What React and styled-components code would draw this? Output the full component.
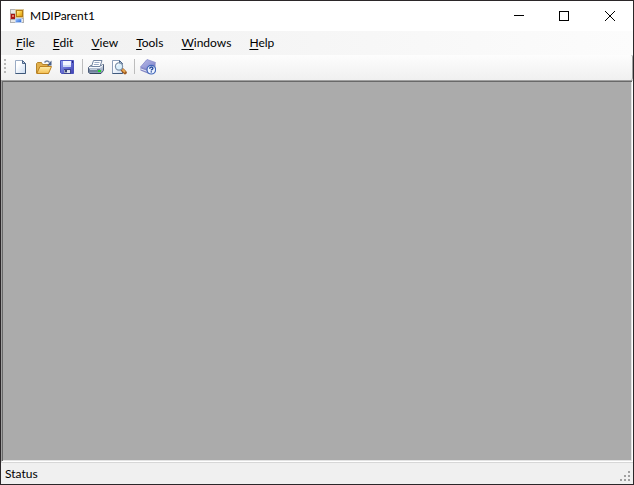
import styled, { createGlobalStyle } from "styled-components";

const MENUS = ["File", "Edit", "View", "Tools", "Windows", "Help"];

const App = () => {
  return (
    <>
      <GlobalStyle />
      <Window>
        <TitleBar>
          <AppIcon />
          <Title>MDIParent1</Title>
          <CaptionButton aria-label="Minimize">
            <CaptionSvg viewBox="0 0 11 11">
              <path d="M1 4.5H11" />
            </CaptionSvg>
          </CaptionButton>
          <CaptionButton aria-label="Maximize">
            <CaptionSvg viewBox="0 0 11 11">
              <path d="M.5 .5h9v9h-9z" />
            </CaptionSvg>
          </CaptionButton>
          <CaptionButton aria-label="Close">
            <CaptionSvg viewBox="0 0 11 11" $smooth>
              <path d="M0 0l10 10M10 0l-10 10" />
            </CaptionSvg>
          </CaptionButton>
        </TitleBar>
        <MenuBar>
          {MENUS.map((menu) => (
            <MenuItem key={menu}>
              <Mnemonic>{menu[0]}</Mnemonic>
              {menu.slice(1)}
            </MenuItem>
          ))}
        </MenuBar>
        <ToolBar role="toolbar">
          <Grip />
          <ToolButton aria-label="New">
            <NewIcon />
          </ToolButton>
          <ToolButton aria-label="Open">
            <OpenIcon />
          </ToolButton>
          <ToolButton aria-label="Save">
            <SaveIcon />
          </ToolButton>
          <Separator />
          <ToolButton aria-label="Print">
            <PrintIcon />
          </ToolButton>
          <ToolButton aria-label="Print Preview">
            <PreviewIcon />
          </ToolButton>
          <Separator />
          <ToolButton aria-label="Help">
            <HelpIcon />
          </ToolButton>
        </ToolBar>
        <MdiClient />
        <StatusBar>
          <span>Status</span>
          <SizeGrip viewBox="0 0 11 11">
            <path d="M8 0h2v2h-2zM4 4h2v2h-2zM8 4h2v2h-2zM0 8h2v2h-2zM4 8h2v2h-2zM8 8h2v2h-2z" />
          </SizeGrip>
        </StatusBar>
      </Window>
    </>
  );
};

const AppIcon = () => (
  <AppSvg viewBox="0 0 14 14">
    <defs>
      <linearGradient id="appGold" x2="1" y2="1">
        <stop stopColor="#fff0a0" />
        <stop offset=".5" stopColor="#f7c83c" />
        <stop offset="1" stopColor="#d99a10" />
      </linearGradient>
      <linearGradient id="appBlue" x2="1" y2="1">
        <stop stopColor="#9cc4ff" />
        <stop offset="1" stopColor="#2f6cd8" />
      </linearGradient>
    </defs>
    <path d="M0 0h14v14h-14z" fill="#b0b0b0" />
    <path d="M1 1h4v3h-4zM1 11h4v2h-4zM12 10h1v3h-1z" fill="#e8e8e8" />
    <path d="M0 4h1v7h-1z" fill="#c98a8a" />
    <path d="M1 5h4v5h-4z" fill="#a51414" />
    <path d="M2 6h2v2h-2z" fill="#e77a6a" />
    <path d="M5 0h9v9h-9z" fill="#d9c596" />
    <path d="M6 1h7v7h-7z" fill="#b57a14" />
    <path d="M7 2h5v5h-5z" fill="url(#appGold)" />
    <path d="M5 9h7v5h-7z" fill="#b8cdf0" />
    <path d="M6 10h5v3h-5z" fill="url(#appBlue)" />
  </AppSvg>
);

const NewIcon = () => (
  <ToolSvg viewBox="0 0 16 16">
    <defs>
      <linearGradient id="paper" x2="1" y2="1">
        <stop offset=".3" stopColor="#fff" />
        <stop offset="1" stopColor="#c9daf0" />
      </linearGradient>
    </defs>
    <path d="M2.500 1.500h7l3 3v10h-10z" fill="url(#paper)" stroke="#9aabc4" />
    <path d="M12.500 4.500v10h-10" fill="none" stroke="#3e5879" />
    <path d="M9.500 1.500v3h3z" fill="#c1d0e4" stroke="#4a6489" />
  </ToolSvg>
);

const OpenIcon = () => (
  <ToolSvg viewBox="0 0 16 16">
    <defs>
      <linearGradient id="folder" x2="0" y2="1">
        <stop stopColor="#ffefae" />
        <stop offset="1" stopColor="#f3bd4e" />
      </linearGradient>
    </defs>
    <path d="M.5 14V4.500l1-1h4l1 2h6V14z" fill="#e2b04c" stroke="#b4842c" />
    <path d="M.8 14.500L4 7.500h11.500l-3 7z" fill="url(#folder)" stroke="#bd8220" />
    <path d="M8.500 3.500c1.500-2 3.500-2 5 0" fill="none" stroke="#6c80a0" strokeWidth="1.400" />
    <path d="M15.500 1.500v5h-4.500z" fill="#4b6188" />
  </ToolSvg>
);

const SaveIcon = () => (
  <ToolSvg viewBox="0 0 16 16">
    <defs>
      <linearGradient id="disk" x2="1" y2="1">
        <stop stopColor="#8c9cf0" />
        <stop offset="1" stopColor="#4040b4" />
      </linearGradient>
    </defs>
    <path d="M1.500 1.500h13v13h-12l-1-1z" fill="url(#disk)" stroke="#4a52bc" />
    <path d="M4 2h8v6h-8z" fill="#f1f4ff" />
    <path d="M4 6h8v2h-8z" fill="#cdd8f5" />
    <path d="M13 2h1v2h-1z" fill="#252581" />
    <path d="M5 10h7v5h-7z" fill="#3a4290" />
    <path d="M5 11h6v3h-6z" fill="#9fa8bd" />
    <path d="M8 11h3v3h-3z" fill="#dfe4ee" />
    <path d="M6 11h2v2h-2z" fill="#354078" />
  </ToolSvg>
);

const PrintIcon = () => (
  <ToolSvg viewBox="0 0 16 16">
    <defs>
      <linearGradient id="printer" x2="0" y2="1">
        <stop stopColor="#dce3ee" />
        <stop offset="1" stopColor="#7d8faa" />
      </linearGradient>
    </defs>
    <path d="M.5 8.500L3 6.500h10l2.500-1v6l-2.500 3h-11l-1.500-1z" fill="url(#printer)" stroke="#4b5c79" />
    <path d="M3.500 7.500l2-6h8.500l-2 6z" fill="#fff" stroke="#7184a1" />
    <path d="M6.500 3.500h5M5.800 5.500h5" stroke="#9aabc5" />
    <path d="M1 8.500h11l3-2.500" fill="none" stroke="#f8fbff" />
    <path d="M1 10h11v3h-11z" fill="#71829b" />
    <path d="M2 10h7v1h-7z" fill="#c2cedd" />
    <path d="M10 11h3v2h-3z" fill="#20d62b" />
    <path d="M2 14.500h11" stroke="#36465e" />
  </ToolSvg>
);

const PreviewIcon = () => (
  <ToolSvg viewBox="0 0 16 16">
    <path d="M1.500 1.500h7l3 3v10h-10z" fill="url(#paper)" stroke="#8d9fb9" />
    <path d="M11.500 8v6.500h-10" fill="none" stroke="#405a7d" />
    <path d="M8.500 1.500v3h3z" fill="#b6c6db" stroke="#4a6489" />
    <path d="M11.500 11l2.500 2.500" stroke="#9c5a20" strokeWidth="3.600" strokeLinecap="round" />
    <path d="M12 11l1.500 1.500" stroke="#e8a850" strokeWidth="2" strokeLinecap="round" />
    <circle cx="8" cy="7.500" r="3.600" fill="#dcf0fb" stroke="#8094ab" strokeWidth="1.200" />
    <path d="M6 7c0-1.200 1-2 2-2" fill="none" stroke="#fff" />
  </ToolSvg>
);

const HelpIcon = () => (
  <ToolSvg viewBox="0 0 16 16">
    <defs>
      <linearGradient id="book" x2="1" y2="1">
        <stop stopColor="#b9bce9" />
        <stop offset="1" stopColor="#7c80c8" />
      </linearGradient>
    </defs>
    <path d="M.5 8.500l6-7.500 9 3v6l-6.500 5-8.500-3.500z" fill="#8487c4" />
    <path d="M1 10l8 3 6-6" fill="none" stroke="#e5e7f7" />
    <path d="M.5 8l6.500-7.500 8.500 3-6 7.500z" fill="url(#book)" stroke="#8b8ecd" strokeWidth=".8" />
    <circle cx="11.300" cy="10.700" r="4.300" fill="#eef4ff" stroke="#4167b9" strokeWidth="1.200" />
    <path d="M9.700 9.700c0-2.200 3.200-2.200 3.200-.3 0 1-1.600 1-1.600 2.100" fill="none" stroke="#254b9f" strokeWidth="1.400" />
    <path d="M10.600 12.300h1.400v1.300h-1.400z" fill="#254b9f" />
  </ToolSvg>
);

const GlobalStyle = createGlobalStyle`
  * {
    box-sizing: border-box;
  }

  body {
    margin: 0;
    font-family: "Segoe UI", "Lato", "Open Sans", sans-serif;
    font-size: 12px;
    line-height: 16px;
    color: #000;
  }

  button {
    border: none;
    padding: 0;
    background: transparent;
    font: inherit;
    color: inherit;
  }
`;

const Window = styled.div`
  height: 100vh;
  display: flex;
  flex-direction: column;
  border: 1px solid #2b2729;
  background: #f0f0f0;
`;

const TitleBar = styled.header`
  display: flex;
  align-items: center;
  height: 30px;
  padding-left: 9px;
  background: #fff;
`;

const Title = styled.h1`
  flex: 1;
  margin: 0 0 0 6px;
  font-size: 12px;
  font-weight: 400;
`;

const CaptionButton = styled.button`
  display: flex;
  align-items: center;
  justify-content: center;
  width: 46px;
  height: 30px;
`;

const CaptionSvg = styled.svg`
  width: 11px;
  height: 11px;
  fill: none;
  stroke: #000;
  overflow: visible;
  shape-rendering: ${({ $smooth }) => ($smooth ? "auto" : "crispEdges")};
`;

const MenuBar = styled.nav`
  display: flex;
  align-items: center;
  height: 24px;
  padding-left: 6px;
  background: linear-gradient(90deg, #f0f0f0, #fcfcfc);
`;

const MenuItem = styled.button`
  height: 20px;
  padding: 0 9px;
`;

const Mnemonic = styled.span`
  text-decoration: underline;
  text-underline-offset: 2px;
`;

const ToolBar = styled.div`
  display: flex;
  align-items: center;
  height: 25px;
  padding: 0 0 2px 3px;
  border-right: 1px solid #a0a0a0;
  border-radius: 0 2px 2px 0;
  background: linear-gradient(#fdfdfd, #f0f0f0);
`;

const Grip = styled.div`
  width: 2px;
  height: 15px;
  margin-right: 3px;
  background: repeating-linear-gradient(#b8b8b8 0 2px, transparent 2px 4px);
`;

const ToolButton = styled.button`
  display: flex;
  align-items: center;
  justify-content: center;
  width: 23px;
  height: 22px;
`;

const Separator = styled.div`
  width: 1px;
  height: 15px;
  margin: 0 1px 0 4px;
  background: #bdbdbd;
`;

const AppSvg = styled.svg`
  width: 14px;
  height: 14px;
  shape-rendering: crispEdges;
`;

const ToolSvg = styled.svg`
  width: 16px;
  height: 16px;
`;

const MdiClient = styled.main`
  flex: 1;
  border: 1px solid;
  border-color: #a0a0a0 #fff #fff #a0a0a0;
  box-shadow:
    inset 1px 1px #696969,
    inset -1px -1px #e3e3e3;
  background: #ababab;
`;

const StatusBar = styled.footer`
  display: flex;
  align-items: center;
  justify-content: space-between;
  height: 22px;
  padding-left: 4px;
  border-top: 1px solid #d7d7d7;
`;

const SizeGrip = styled.svg`
  align-self: flex-end;
  width: 11px;
  height: 11px;
  margin: 0 2px 2px 0;
  fill: #a0a0a0;
`;

export default App;
